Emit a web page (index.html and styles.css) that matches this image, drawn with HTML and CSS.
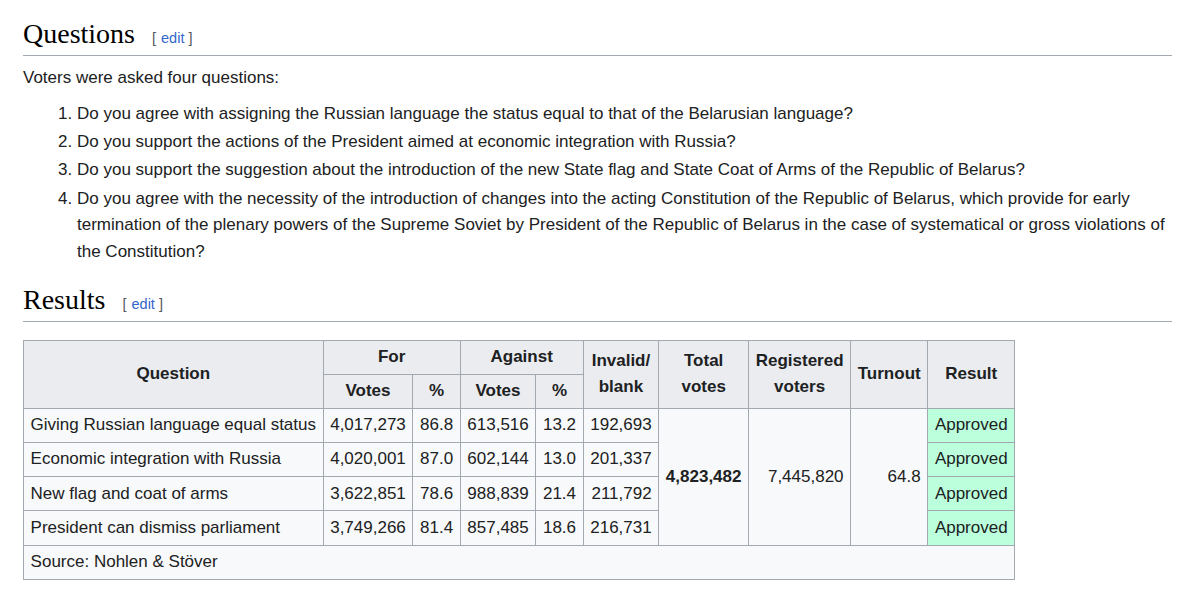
FILE: index.html
```html
<!DOCTYPE html>
<html lang="en">
<head>
<meta charset="utf-8">
<title>Belarusian referendum</title>
<link rel="stylesheet" href="styles.css">
</head>
<body>
<div class="content">
  <h2 class="section-heading first">Questions<span class="editsection"><span class="bracket">[</span><a href="#">edit</a><span class="bracket">]</span></span></h2>
  <p class="intro">Voters were asked four questions:</p>
  <ol class="questions">
    <li>Do you agree with assigning the Russian language the status equal to that of the Belarusian language?</li>
    <li>Do you support the actions of the President aimed at economic integration with Russia?</li>
    <li>Do you support the suggestion about the introduction of the new State flag and State Coat of Arms of the Republic of Belarus?</li>
    <li>Do you agree with the necessity of the introduction of changes into the acting Constitution of the Republic of Belarus, which provide for early termination of the plenary powers of the Supreme Soviet by President of the Republic of Belarus in the case of systematical or gross violations of the Constitution?</li>
  </ol>
  <h2 class="section-heading">Results<span class="editsection"><span class="bracket">[</span><a href="#">edit</a><span class="bracket">]</span></span></h2>
  <table class="wikitable">
    <thead>
      <tr>
        <th rowspan="2">Question</th>
        <th colspan="2">For</th>
        <th colspan="2">Against</th>
        <th rowspan="2">Invalid/<br>blank</th>
        <th rowspan="2">Total<br>votes</th>
        <th rowspan="2">Registered<br>voters</th>
        <th rowspan="2">Turnout</th>
        <th rowspan="2">Result</th>
      </tr>
      <tr>
        <th>Votes</th>
        <th>%</th>
        <th>Votes</th>
        <th>%</th>
      </tr>
    </thead>
    <tbody>
      <tr>
        <td class="name">Giving Russian language equal status</td>
        <td class="num">4,017,273</td>
        <td class="num">86.8</td>
        <td class="num">613,516</td>
        <td class="num">13.2</td>
        <td class="num">192,693</td>
        <td class="num total" rowspan="4">4,823,482</td>
        <td class="num" rowspan="4">7,445,820</td>
        <td class="num" rowspan="4">64.8</td>
        <td class="approved">Approved</td>
      </tr>
      <tr>
        <td class="name">Economic integration with Russia</td>
        <td class="num">4,020,001</td>
        <td class="num">87.0</td>
        <td class="num">602,144</td>
        <td class="num">13.0</td>
        <td class="num">201,337</td>
        <td class="approved">Approved</td>
      </tr>
      <tr>
        <td class="name">New flag and coat of arms</td>
        <td class="num">3,622,851</td>
        <td class="num">78.6</td>
        <td class="num">988,839</td>
        <td class="num">21.4</td>
        <td class="num">211,792</td>
        <td class="approved">Approved</td>
      </tr>
      <tr>
        <td class="name">President can dismiss parliament</td>
        <td class="num">3,749,266</td>
        <td class="num">81.4</td>
        <td class="num">857,485</td>
        <td class="num">18.6</td>
        <td class="num">216,731</td>
        <td class="approved">Approved</td>
      </tr>
      <tr>
        <td class="source" colspan="10">Source: Nohlen &amp; Stöver</td>
      </tr>
    </tbody>
  </table>
</div>
</body>
</html>
```
FILE: styles.css
```css
html, body {
  margin: 0;
  padding: 0;
  background: #ffffff;
}

body {
  font-family: "Liberation Sans", Arial, sans-serif;
  font-size: 17px;
  line-height: 26.6px;
  color: #202122;
}

.content {
  padding: 0 28px 0 23px;
}

.section-heading {
  font-family: "Liberation Serif", "Times New Roman", serif;
  font-weight: normal;
  font-size: 28px;
  line-height: 36px;
  color: #000000;
  margin: 16px 0 0 0;
  padding: 0 0 3px 0;
  border-bottom: 1px solid #a2a9b1;
}

.section-heading + .wikitable {
  margin-top: 18px;
}

.editsection {
  font-family: "Liberation Sans", Arial, sans-serif;
  font-size: 14.5px;
  line-height: 0;
  margin-left: 17px;
  white-space: nowrap;
}

.editsection .bracket {
  color: #54595d;
}

.editsection .bracket:first-child {
  margin-right: 5px;
}

.editsection .bracket:last-child {
  margin-left: 4px;
}

.editsection a {
  color: #3366cc;
  text-decoration: none;
}

.intro {
  margin: 9px 0 9px 0;
}

.questions {
  margin: 0 0 1.5px 0;
  padding-left: 54px;
}

.questions li {
  margin-bottom: 1.8px;
}

.wikitable {
  border-collapse: collapse;
  border: 1px solid #a2a9b1;
  background: #f8f9fa;
  color: #202122;
  font-size: 17px;
  line-height: 26.6px;
}

.wikitable th,
.wikitable td {
  border: 1px solid #a2a9b1;
  padding: 3.3px 6.6px;
}

.wikitable th {
  background: #eaecf0;
  font-weight: bold;
  text-align: center;
}

.wikitable td.name {
  text-align: left;
}

.wikitable td.num {
  text-align: right;
}

.wikitable td.total {
  font-weight: bold;
}

.wikitable td.approved {
  background: #bbffdd;
  text-align: center;
}

.wikitable td.source {
  text-align: left;
}
```
